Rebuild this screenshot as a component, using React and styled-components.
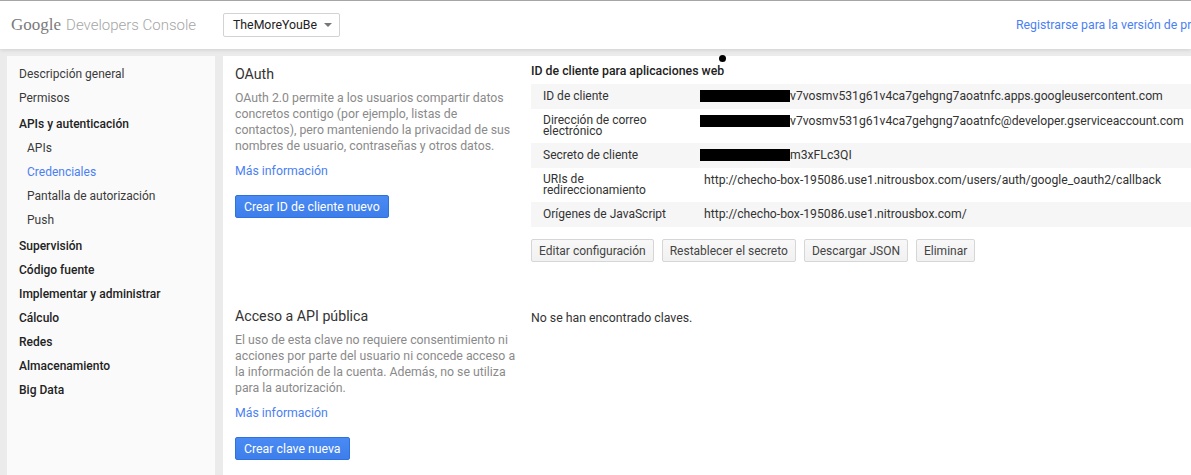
import styled, { createGlobalStyle } from "styled-components";

const GlobalStyle = createGlobalStyle`
  html, body {
    margin: 0;
    padding: 0;
    background: #ebebeb;
    overflow: hidden;
  }
  body {
    font-family: Roboto, "Liberation Sans", Arial, sans-serif;
    font-size: 12.3px;
    color: #333;
  }
`;

const Page = styled.div`
  width: 1191px;
  height: 475px;
  overflow: hidden;
  display: flex;
  flex-direction: column;
`;

const Header = styled.header`
  height: 48px;
  flex: none;
  border-top: 1px solid #a5a5a5;
  background: #fff;
  box-shadow: 0 1px 4px rgba(0, 0, 0, 0.12);
  display: flex;
  align-items: center;
  padding-left: 11px;
  position: relative;
  z-index: 1;
  white-space: nowrap;
  overflow: hidden;
`;

const Logo = styled.div`
  display: flex;
  align-items: baseline;
  gap: 5px;
  width: 212px;
  flex: none;
`;

const GoogleMark = styled.span`
  font-family: "Liberation Serif", "DejaVu Serif", serif;
  font-size: 17px;
  color: #7a7a7a;
`;

const ProductName = styled.span`
  font-size: 15px;
  font-weight: 300;
  color: #a6a6a6;
`;

const ProjectPicker = styled.div`
  height: 24px;
  width: 117px;
  box-sizing: border-box;
  border: 1px solid #d3d3d3;
  border-radius: 2px;
  display: flex;
  align-items: center;
  justify-content: space-between;
  padding: 0 7px 0 9px;
  font-size: 12.3px;
  color: #222;
  flex: none;
`;

const Caret = styled.span`
  width: 0;
  height: 0;
  border-left: 4px solid transparent;
  border-right: 4px solid transparent;
  border-top: 4px solid #777;
`;

const TrialLink = styled.a`
  margin-left: 676px;
  font-size: 12.3px;
  color: #4b7ff2;
  text-decoration: none;
  flex: none;
`;

const Body = styled.div`
  flex: 1;
  display: flex;
  gap: 8px;
  padding: 7px 0 0 7px;
`;

const Sidebar = styled.nav`
  width: 208px;
  flex: none;
  background: #fafafa;
  padding: 6px 0 0;
  box-sizing: border-box;
`;

const NavItem = styled.div`
  height: 24px;
  line-height: 24px;
  padding-left: ${(p) => (p.$sub ? 20 : 12)}px;
  font-size: 12px;
  font-weight: ${(p) => (p.$bold ? 500 : 400)};
  color: ${(p) => (p.$active ? "#4b7ff2" : p.$bold ? "#222" : "#3a3a3a")};
  margin-top: ${(p) => (p.$gapTop ? 2 : 0)}px;
  margin-bottom: ${(p) => (p.$gapBottom ? 2 : 0)}px;
`;

const Main = styled.main`
  flex: 1;
  background: #fff;
  padding: 6px 0 0 12px;
  position: relative;
`;

const Section = styled.section`
  display: flex;
  margin-bottom: ${(p) => p.$after || 0}px;
`;

const Intro = styled.div`
  width: 296px;
  flex: none;
  box-sizing: border-box;
  padding-right: 13px;
`;

const Title = styled.h2`
  margin: 2px 0 0;
  font-size: 14.2px;
  font-weight: 400;
  line-height: 20px;
  color: #333;
`;

const Description = styled.p`
  margin: 6px 0 0;
  font-size: 12.3px;
  line-height: 16px;
  color: #8a8a8a;
`;

const MoreLink = styled.a`
  display: block;
  margin-top: 9px;
  line-height: 16px;
  font-size: 12.3px;
  color: #4b7ff2;
  text-decoration: none;
`;

const PrimaryButton = styled.button`
  margin-top: 16px;
  height: 23px;
  padding: 0 8px;
  font-family: inherit;
  font-size: 12.3px;
  color: #fff;
  background: linear-gradient(#4a8af4, #3d7eea);
  border: 1px solid #2f71de;
  border-radius: 2px;
`;

const Details = styled.div`
  flex: 1;
  padding-top: ${(p) => p.$top || 0}px;
`;

const DetailHeading = styled.h3`
  margin: 0;
  font-size: 12.3px;
  font-weight: 500;
  line-height: 18px;
  color: #222;
`;

const Table = styled.div`
  margin-top: 4px;
  display: grid;
  grid-template-columns: 169px 1fr;
`;

const Cell = styled.div`
  padding: ${(p) => (p.$label ? "6px 30px 6px 12px" : "6px 0 6px 4px")};
  line-height: ${(p) => (p.$label ? 11 : 13)}px;
  min-height: ${(p) => (p.$label ? 13 : 0)}px;
  font-size: ${(p) => (p.$label ? 12 : 12.2)}px;
  color: #333;
  background: ${(p) => (p.$shade ? "#f6f6f6" : "#fff")};
  white-space: ${(p) => (p.$label ? "normal" : "nowrap")};
  display: flex;
  align-items: ${(p) => (p.$label ? "center" : "flex-start")};
`;

const LabelText = styled.span`
  display: block;
`;

const Redacted = styled.span`
  display: inline-block;
  width: ${(p) => p.$w}px;
  height: 12px;
  margin-left: -4px;
  background: #000;
  flex: none;
`;

const Actions = styled.div`
  display: flex;
  gap: 8px;
  margin-top: 12px;
`;

const Button = styled.button`
  height: 23px;
  padding: 0 7px;
  font-family: inherit;
  font-size: 12px;
  color: #444;
  background: linear-gradient(#f8f8f8, #f1f1f1);
  border: 1px solid #d6d6d6;
  border-radius: 2px;
`;

const Empty = styled.div`
  line-height: 18px;
  font-size: 12.3px;
  color: #333;
`;

const Dot = styled.span`
  position: absolute;
  left: 496px;
  top: -1px;
  width: 7px;
  height: 7px;
  border-radius: 50%;
  background: #000;
`;

const navItems = [
  { label: "Descripción general" },
  { label: "Permisos" },
  { label: "APIs y autenticación", bold: true, gapTop: true },
  { label: "APIs", sub: true },
  { label: "Credenciales", sub: true, active: true },
  { label: "Pantalla de autorización", sub: true },
  { label: "Push", sub: true, gapBottom: true },
  { label: "Supervisión", bold: true },
  { label: "Código fuente", bold: true },
  { label: "Implementar y administrar", bold: true },
  { label: "Cálculo", bold: true },
  { label: "Redes", bold: true },
  { label: "Almacenamiento", bold: true },
  { label: "Big Data", bold: true },
];

const clientRows = [
  { label: "ID de cliente", hidden: 90, value: "v7vosmv531g61v4ca7gehgng7aoatnfc.apps.googleusercontent.com" },
  { label: "Dirección de correo electrónico", hidden: 90, value: "v7vosmv531g61v4ca7gehgng7aoatnfc@developer.gserviceaccount.com" },
  { label: "Secreto de cliente", hidden: 90, value: "m3xFLc3QI" },
  { label: "URIs de redireccionamiento", value: "http://checho-box-195086.use1.nitrousbox.com/users/auth/google_oauth2/callback" },
  { label: "Orígenes de JavaScript", value: "http://checho-box-195086.use1.nitrousbox.com/" },
];

export default function App() {
  return (
    <>
      <GlobalStyle />
      <Page>
        <Header>
          <Logo>
            <GoogleMark>Google</GoogleMark>
            <ProductName>Developers Console</ProductName>
          </Logo>
          <ProjectPicker>
            TheMoreYouBe
            <Caret />
          </ProjectPicker>
          <TrialLink href="#">Registrarse para la versión de prueba gratuita</TrialLink>
        </Header>

        <Body>
          <Sidebar>
            {navItems.map((item) => (
              <NavItem
                key={item.label}
                $sub={item.sub}
                $bold={item.bold}
                $active={item.active}
                $gapTop={item.gapTop}
                $gapBottom={item.gapBottom}
              >
                {item.label}
              </NavItem>
            ))}
          </Sidebar>

          <Main>
            <Dot />
            <Section $after={42}>
              <Intro>
                <Title>OAuth</Title>
                <Description>
                  OAuth 2.0 permite a los usuarios compartir datos concretos contigo (por
                  ejemplo, listas de contactos), pero manteniendo la privacidad de sus
                  nombres de usuario, contraseñas y otros datos.
                </Description>
                <MoreLink href="#">Más información</MoreLink>
                <PrimaryButton>Crear ID de cliente nuevo</PrimaryButton>
              </Intro>
              <Details>
                <DetailHeading>ID de cliente para aplicaciones web</DetailHeading>
                <Table>
                  {clientRows.flatMap((row, i) => [
                    <Cell key={row.label + "l"} $label $shade={i % 2 === 0}>
                      <LabelText>{row.label}</LabelText>
                    </Cell>,
                    <Cell key={row.label + "v"} $shade={i % 2 === 0}>
                      {row.hidden && <Redacted $w={row.hidden} />}
                      <span>{row.value}</span>
                    </Cell>,
                  ])}
                </Table>
                <Actions>
                  <Button>Editar configuración</Button>
                  <Button>Restablecer el secreto</Button>
                  <Button>Descargar JSON</Button>
                  <Button>Eliminar</Button>
                </Actions>
              </Details>
            </Section>

            <Section>
              <Intro>
                <Title>Acceso a API pública</Title>
                <Description>
                  El uso de esta clave no requiere consentimiento ni acciones por parte del
                  usuario ni concede acceso a la información de la cuenta. Además, no se
                  utiliza para la autorización.
                </Description>
                <MoreLink href="#">Más información</MoreLink>
                <PrimaryButton>Crear clave nueva</PrimaryButton>
              </Intro>
              <Details $top={5}>
                <Empty>No se han encontrado claves.</Empty>
              </Details>
            </Section>
          </Main>
        </Body>
      </Page>
    </>
  );
}
